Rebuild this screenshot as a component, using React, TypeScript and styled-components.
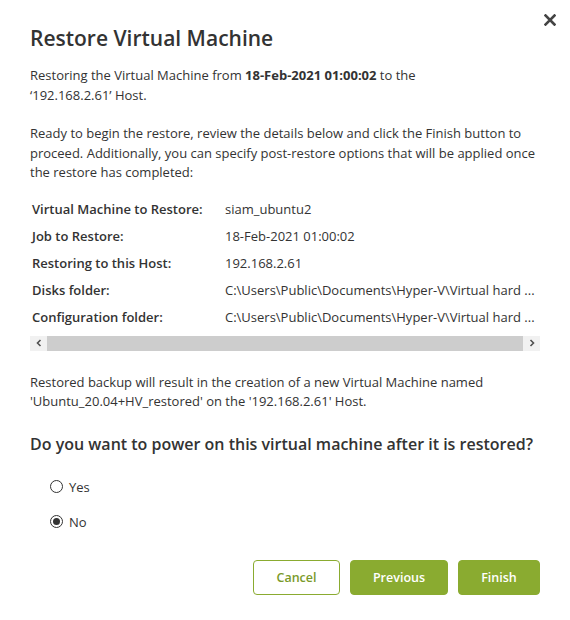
import React from "react";
import styled, { createGlobalStyle } from "styled-components";

const Global = createGlobalStyle`
  html, body { margin: 0; padding: 0; background: #fff; }
  body { font-family: "Open Sans", "Noto Sans", sans-serif; color: #333; }
  * { box-sizing: border-box; }
`;

const Dialog = styled.div`
  position: relative;
  width: 570px;
  height: 620px;
  padding: 22px 30px 0 30px;
  background: #fff;
`;

const Close = styled.button`
  position: absolute;
  top: 12px;
  right: 12px;
  width: 16px;
  height: 16px;
  padding: 0;
  border: none;
  background: transparent;
  display: flex;
  align-items: center;
  justify-content: center;
  cursor: pointer;
`;

const Title = styled.h1`
  margin: 0 0 12px 0;
  font-size: 21px;
  font-weight: 600;
  line-height: 32px;
  color: #333;
`;

const Para = styled.p<{ $gap?: number; $top?: number }>`
  margin: ${(p) => p.$top ?? 0}px 0 ${(p) => p.$gap ?? 0}px 0;
  font-size: 13px;
  line-height: 19.5px;
  color: #333;
`;

const Table = styled.div`
  display: grid;
  grid-template-columns: 193px 1fr;
  padding-left: 2px;
  width: 510px;
`;

const Label = styled.div`
  font-size: 13px;
  font-weight: 600;
  line-height: 27px;
  color: #333;
`;

const Value = styled.div`
  font-size: 13px;
  line-height: 27px;
  color: #333;
  white-space: nowrap;
  overflow: hidden;
`;

const ScrollBar = styled.div`
  margin-top: 5px;
  width: 510px;
  height: 15px;
  display: flex;
  background: #f1f1f1;
`;

const ScrollBtn = styled.div`
  width: 17px;
  height: 15px;
  display: flex;
  align-items: center;
  justify-content: center;
`;

const Thumb = styled.div`
  flex: 1;
  background: #cdcdcd;
`;

const Question = styled.h2`
  margin: 0;
  font-size: 16px;
  font-weight: 600;
  line-height: 24px;
  color: #333;
`;

const Options = styled.div`
  display: flex;
  flex-direction: column;
  gap: 13px;
  margin-top: 20px;
  padding-left: 20px;
`;

const Option = styled.label`
  display: flex;
  align-items: center;
  gap: 6px;
  font-size: 13px;
  line-height: 22px;
  color: #333;
  cursor: pointer;
`;

const Radio = styled.span<{ $checked?: boolean }>`
  width: 13px;
  height: 13px;
  border-radius: 50%;
  border: 1px solid #333;
  display: flex;
  align-items: center;
  justify-content: center;
  &::after {
    content: "";
    width: 7px;
    height: 7px;
    border-radius: 50%;
    background: ${(p) => (p.$checked ? "#333" : "transparent")};
  }
`;

const Footer = styled.div`
  display: flex;
  justify-content: flex-end;
  gap: 10px;
  margin-top: 27px;
`;

const Button = styled.button<{ $outline?: boolean; $w: number }>`
  width: ${(p) => p.$w}px;
  height: 35px;
  border-radius: 4px;
  font-family: "Open Sans", "Noto Sans", sans-serif;
  font-size: 12.5px;
  font-weight: 600;
  cursor: pointer;
  border: 1px solid #8aab30;
  background: ${(p) => (p.$outline ? "#fff" : "#8aab30")};
  color: ${(p) => (p.$outline ? "#7a9a2a" : "#fff")};
`;

const rows: [string, string][] = [
  ["Virtual Machine to Restore:", "siam_ubuntu2"],
  ["Job to Restore:", "18-Feb-2021 01:00:02"],
  ["Restoring to this Host:", "192.168.2.61"],
  ["Disks folder:", "C:\\Users\\Public\\Documents\\Hyper-V\\Virtual hard ..."],
  ["Configuration folder:", "C:\\Users\\Public\\Documents\\Hyper-V\\Virtual hard ..."],
];

export default function App() {
  return (
    <>
      <Global />
      <Dialog>
        <Close aria-label="Close">
          <svg width="12" height="12" viewBox="0 0 12 12">
            <path d="M1.5 1.5 L10.5 10.5 M10.5 1.5 L1.5 10.5" stroke="#444" strokeWidth="2.6" strokeLinecap="square" />
          </svg>
        </Close>
        <Title>Restore Virtual Machine</Title>
        <Para $gap={19}>
          Restoring the Virtual Machine from <b>18-Feb-2021 01:00:02</b> to the
          <br />
          ‘192.168.2.61’ Host.
        </Para>
        <Para $gap={13}>
          Ready to begin the restore, review the details below and click the Finish button to proceed. Additionally, you
          can specify post-restore options that will be applied once the restore has completed:
        </Para>
        <Table>
          {rows.map(([l, v]) => (
            <React.Fragment key={l}>
              <Label>{l}</Label>
              <Value>{v}</Value>
            </React.Fragment>
          ))}
        </Table>
        <ScrollBar>
          <ScrollBtn>
            <svg width="8" height="8" viewBox="0 0 8 8">
              <path d="M5.5 1 L2.5 4 L5.5 7" stroke="#505050" strokeWidth="1.6" fill="none" />
            </svg>
          </ScrollBtn>
          <Thumb />
          <ScrollBtn>
            <svg width="8" height="8" viewBox="0 0 8 8">
              <path d="M2.5 1 L5.5 4 L2.5 7" stroke="#505050" strokeWidth="1.6" fill="none" />
            </svg>
          </ScrollBtn>
        </ScrollBar>
        <Para $top={22} $gap={20}>
          Restored backup will result in the creation of a new Virtual Machine named
          <br />
          'Ubuntu_20.04+HV_restored' on the '192.168.2.61' Host.
        </Para>
        <Question>Do you want to power on this virtual machine after it is restored?</Question>
        <Options>
          <Option>
            <Radio />
            Yes
          </Option>
          <Option>
            <Radio $checked />
            No
          </Option>
        </Options>
        <Footer>
          <Button $outline $w={87}>Cancel</Button>
          <Button $w={98}>Previous</Button>
          <Button $w={82}>Finish</Button>
        </Footer>
      </Dialog>
    </>
  );
}
